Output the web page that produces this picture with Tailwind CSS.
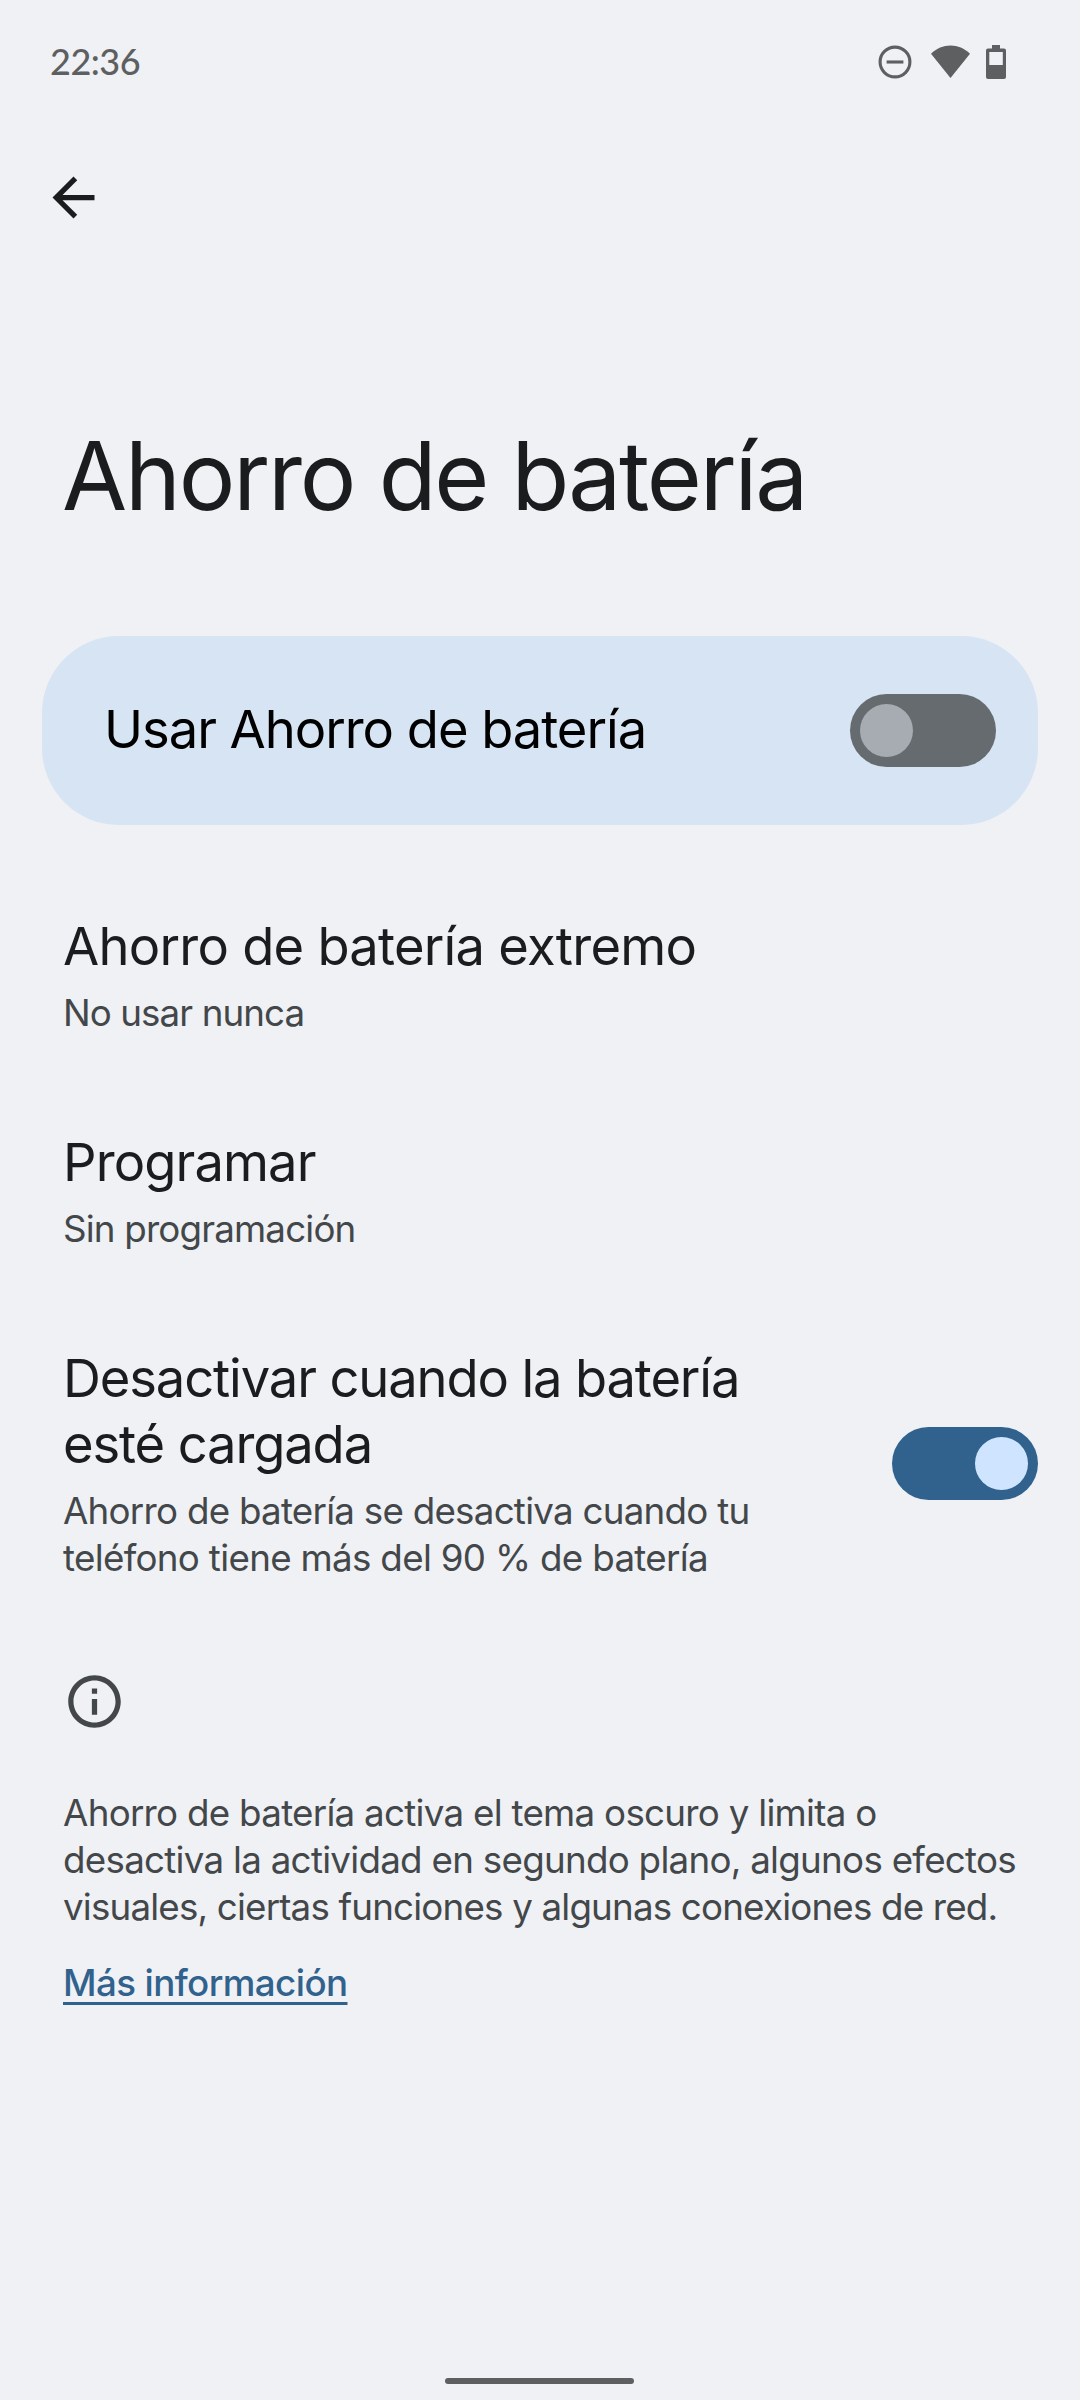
<!DOCTYPE html>
<html lang="es">
<head>
<meta charset="utf-8">
<title>Ahorro de batería</title>
<script src="https://cdn.jsdelivr.net/npm/@tailwindcss/browser@4"></script>
</head>
<body class="bg-[#eff1f5]">
<div class="flex h-[2400px] w-[1080px] flex-col overflow-hidden bg-[#eff1f5] font-['Inter',sans-serif] text-[#1a1c1e]">

  <!-- Status bar -->
  <header class="flex h-[123px] items-center justify-between pr-[74px] pl-[50px] text-[#5e5f61]">
    <span class="font-['Lato',sans-serif] text-[36px] leading-[47px] font-medium tracking-[-0.5px]">22:36</span>
    <div class="flex items-center pt-px">
      <svg class="mr-[19px] h-[34px] w-[34px]" viewBox="0 0 34 34" fill="none" stroke="currentColor" stroke-width="3.1"><circle cx="17" cy="17" r="14.9"/><path d="M8.6 17H25.4"/></svg>
      <svg class="mr-[16px] h-[34px] w-[39px]" viewBox="0 0 39 34" fill="currentColor"><path d="M19.5 33L0 8.8C5.6 3.4 12.3.6 19.5.6S33.400 3.400 39 8.800Z"/></svg>
      <svg class="h-[34px] w-[20px]" viewBox="0 0 20 34" fill="currentColor" fill-rule="evenodd"><path d="M6 0H14V3.600H18A2 2 0 0 1 20 5.600V32A2 2 0 0 1 18 34H2A2 2 0 0 1 0 32V5.600A2 2 0 0 1 2 3.600H6ZM3.300 7V20H16.800V7Z"/></svg>
    </div>
  </header>

  <div class="pt-[43px] pl-[42px]">
    <svg class="h-[63px] w-[63px]" viewBox="0 0 24 24" fill="currentColor"><path d="M20 11H7.830L13.420 5.410 12 4 4 12 12 20 13.410 18.590 7.830 13H20Z"/></svg>
  </div>

  <h1 class="mt-[191px] pl-[62px] text-[94.5px] leading-[112px] tracking-[-2.2px] whitespace-nowrap">Ahorro de batería</h1>

  <!-- Main switch -->
  <section class="mx-[42px] mt-[104px] flex h-[189px] shrink-0 items-center justify-between rounded-[77px] bg-[#d7e4f3] pr-[42px] pl-[62px]">
    <span class="mb-[3px] text-[52.5px] leading-[66px] tracking-[-1.04px] whitespace-nowrap text-black">Usar Ahorro de batería</span>
    <span class="flex h-[73px] w-[146px] items-center rounded-full bg-[#666b6f] px-[10px]"><span class="size-[53px] rounded-full bg-[#a7abb2]"></span></span>
  </section>

  <main class="mt-[88px] flex flex-col gap-[93px] pr-[42px] pl-[63px]">
    <div class="flex flex-col gap-[10px] whitespace-nowrap">
      <h2 class="text-[52.5px] leading-[66px] tracking-[-0.76px]">Ahorro de batería extremo</h2>
      <p class="text-[36.75px] leading-[47px] tracking-[-0.92px] text-[#43474a]">No usar nunca</p>
    </div>
    <div class="flex flex-col gap-[10px] whitespace-nowrap">
      <h2 class="text-[52.5px] leading-[66px] tracking-[-0.89px]">Programar</h2>
      <p class="text-[36.75px] leading-[47px] tracking-[-0.83px] text-[#43474a]">Sin programación</p>
    </div>
    <div class="flex items-center justify-between">
      <div class="flex flex-col gap-[10px] whitespace-nowrap">
        <h2 class="text-[52.5px] leading-[66px] tracking-[-1.13px]">Desactivar cuando la batería<br>esté cargada</h2>
        <p class="text-[36.75px] leading-[47px] tracking-[-0.75px] text-[#43474a]">Ahorro de batería se desactiva cuando tu<br><span class="tracking-[-0.69px]">teléfono tiene más del 90 % de batería</span></p>
      </div>
      <span class="flex h-[73px] w-[146px] items-center justify-end rounded-full bg-[#31628d] px-[10px]"><span class="size-[53px] rounded-full bg-[#cfe5ff]"></span></span>
    </div>
  </main>

  <!-- Footer information -->
  <footer class="mt-[89px] flex flex-col items-start pl-[63px] text-[36.75px] leading-[47px] whitespace-nowrap text-[#43474a]">
    <svg class="h-[63px] w-[63px]" viewBox="0 0 24 24" fill="currentColor"><path d="M11 7h2v2h-2zM11 11h2v6h-2zM12 2C6.480 2 2 6.480 2 12s4.480 10 10 10 10-4.480 10-10S17.520 2 12 2zm0 18c-4.410 0-8-3.590-8-8s3.590-8 8-8 8 3.590 8 8-3.590 8-8 8z"/></svg>
    <p class="mt-[56px] tracking-[-0.73px]">Ahorro de batería activa el tema oscuro y limita o<br>desactiva la actividad en segundo plano, algunos efectos<br><span class="tracking-[-0.82px]">visuales, ciertas funciones y algunas conexiones de red.</span></p>
    <a class="mt-[29px] font-medium tracking-[-0.6px] text-[#31628d] underline decoration-[3px] underline-offset-[6px] [text-decoration-skip-ink:none]">Más información</a>
  </footer>

  <!-- Gesture handle -->
  <div class="mt-auto mb-[16px] ml-[445px] h-[6px] w-[189px] shrink-0 rounded-full bg-[#5e5f61]"></div>
</div>
</body>
</html>
